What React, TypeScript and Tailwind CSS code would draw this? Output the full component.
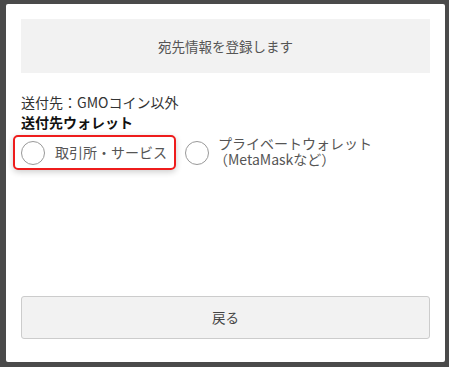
export default function App() {
  return (
    <div
      className="w-[449px] h-[367px] bg-[#4a4a4a] pt-[4px] pl-[6px]"
      style={{ fontFamily: '"Noto Sans CJK JP", "Noto Sans", sans-serif' }}
    >
      <div className="w-[439px] h-[358px] bg-white rounded-[2px] px-[15px] pt-[15px] pb-[23px] flex flex-col">
        {/* header */}
        <div className="h-[54px] bg-[#f2f2f2] flex items-center justify-center text-[13.5px] text-[#555]">
          宛先情報を登録します
        </div>

        <div className="mt-[20px] text-[14px] leading-[19px] text-[#333]">送付先：GMOコイン以外</div>
        <div className="mt-[1px] text-[14px] leading-[19px] font-bold text-[#111]">送付先ウォレット</div>

        {/* radios */}
        <div className="mt-[3px] -ml-[8px] flex items-center">
          <label className="w-[163px] h-[35px] flex items-center border-2 border-[#ee1c1c] rounded-[5px] shadow-[0_2px_6px_rgba(0,0,0,0.2)] pl-[6px]">
            <span className="w-[24px] h-[24px] rounded-full border border-[#999] bg-white" />
            <span className="ml-[10px] text-[14px] text-[#555]">取引所・サービス</span>
          </label>
          <label className="ml-[9px] flex items-center">
            <span className="w-[24px] h-[24px] rounded-full border border-[#999] bg-white" />
            <span className="ml-[9px] flex flex-col text-[14px] leading-[16px] text-[#555] -mt-[4px]">
              <span>プライベートウォレット</span>
              <span className="-ml-[4px]">（MetaMaskなど）</span>
            </span>
          </label>
        </div>

        <div className="flex-1" />

        <button className="h-[43px] w-full bg-[#f2f2f2] border border-[#ccc] rounded-[3px] text-[13.5px] text-[#444]">
          戻る
        </button>
      </div>
    </div>
  );
}
